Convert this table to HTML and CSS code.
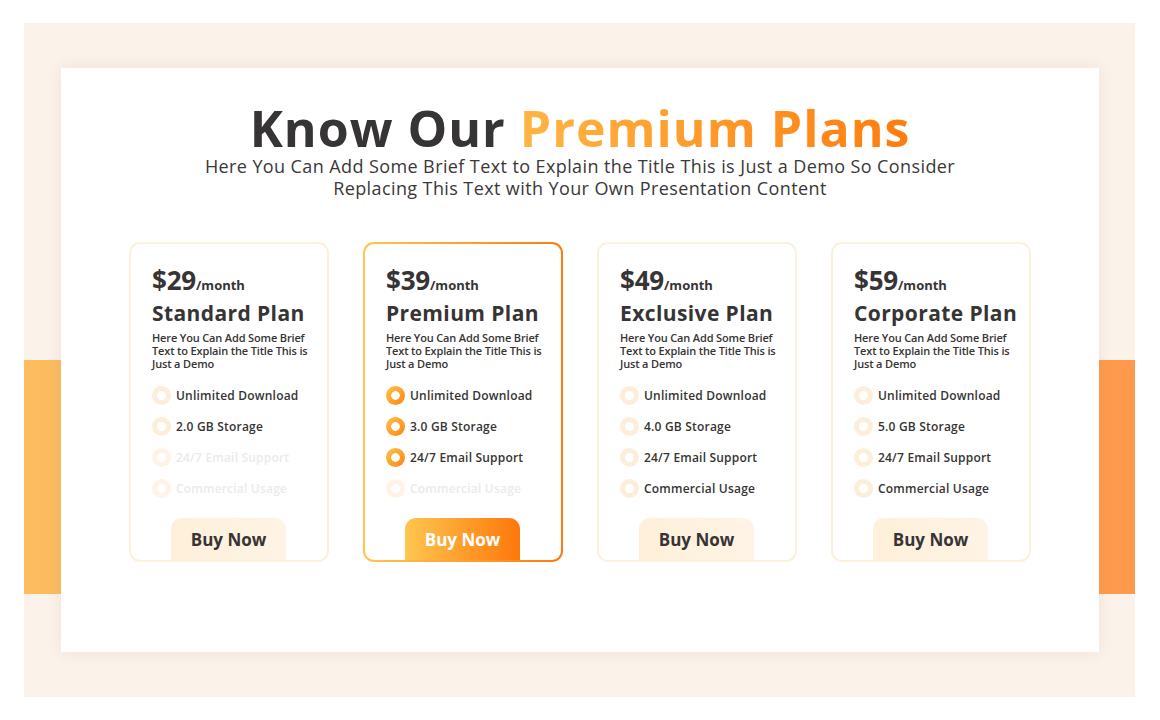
FILE: index.html
```html
<!DOCTYPE html>
<html lang="en">
<head>
<meta charset="utf-8">
<title>Know Our Premium Plans</title>
<link rel="stylesheet" href="styles.css">
</head>
<body>
<div class="frame">
  <div class="sheet">
    <h1 class="title">Know Our <span class="accent">Premium Plans</span></h1>
    <p class="lead">Here You Can Add Some Brief Text to Explain the Title This is Just a Demo So Consider<br>Replacing This Text with Your Own Presentation Content</p>
    <div class="plans">
      <div class="plan">
        <div class="price"><span class="amount">$29</span><span class="per">/month</span></div>
        <div class="name">Standard Plan</div>
        <p class="desc">Here You Can Add Some Brief Text to Explain the Title This is Just a Demo</p>
        <ul class="features">
          <li class="feat"><span class="dot"></span>Unlimited Download</li>
          <li class="feat"><span class="dot"></span>2.0 GB Storage</li>
          <li class="feat off"><span class="dot"></span>24/7 Email Support</li>
          <li class="feat off"><span class="dot"></span>Commercial Usage</li>
        </ul>
        <div class="buy">Buy Now</div>
      </div>
      <div class="plan featured">
        <div class="price"><span class="amount">$39</span><span class="per">/month</span></div>
        <div class="name">Premium Plan</div>
        <p class="desc">Here You Can Add Some Brief Text to Explain the Title This is Just a Demo</p>
        <ul class="features">
          <li class="feat"><span class="dot"></span>Unlimited Download</li>
          <li class="feat"><span class="dot"></span>3.0 GB Storage</li>
          <li class="feat"><span class="dot"></span>24/7 Email Support</li>
          <li class="feat off"><span class="dot"></span>Commercial Usage</li>
        </ul>
        <div class="buy">Buy Now</div>
      </div>
      <div class="plan">
        <div class="price"><span class="amount">$49</span><span class="per">/month</span></div>
        <div class="name">Exclusive Plan</div>
        <p class="desc">Here You Can Add Some Brief Text to Explain the Title This is Just a Demo</p>
        <ul class="features">
          <li class="feat"><span class="dot"></span>Unlimited Download</li>
          <li class="feat"><span class="dot"></span>4.0 GB Storage</li>
          <li class="feat"><span class="dot"></span>24/7 Email Support</li>
          <li class="feat"><span class="dot"></span>Commercial Usage</li>
        </ul>
        <div class="buy">Buy Now</div>
      </div>
      <div class="plan">
        <div class="price"><span class="amount">$59</span><span class="per">/month</span></div>
        <div class="name">Corporate Plan</div>
        <p class="desc">Here You Can Add Some Brief Text to Explain the Title This is Just a Demo</p>
        <ul class="features">
          <li class="feat"><span class="dot"></span>Unlimited Download</li>
          <li class="feat"><span class="dot"></span>5.0 GB Storage</li>
          <li class="feat"><span class="dot"></span>24/7 Email Support</li>
          <li class="feat"><span class="dot"></span>Commercial Usage</li>
        </ul>
        <div class="buy">Buy Now</div>
      </div>
    </div>
  </div>
</div>
</body>
</html>
```

FILE: styles.css
```css
* { box-sizing: border-box; }
html, body { margin: 0; padding: 0; background: #ffffff; }
body { font-family: "Open Sans", "Liberation Sans", sans-serif; color: #363434; }

.frame {
  width: 1111px;
  height: 674px;
  margin: 23px 0 0 24px;
  padding: 45px 36px 45px 37px;
  background:
    linear-gradient(to right, #fcbc60, #fe994d) 0 337px / 100% 234px no-repeat,
    #fbf2ea;
}

.sheet {
  height: 584px;
  background: #ffffff;
  box-shadow: 0 0 14px rgba(170, 130, 90, 0.14);
  padding-top: 35px;
  display: flex;
  flex-direction: column;
  align-items: center;
}

.title {
  margin: 0;
  font-size: 50px;
  line-height: 50px;
  font-weight: 700;
  letter-spacing: 1px;
  color: #363434;
  white-space: nowrap;
}
.accent {
  background: linear-gradient(to right, #feb543, #fe7c0f);
  -webkit-background-clip: text;
  background-clip: text;
  color: transparent;
}

.lead {
  margin: 2px 0 0;
  font-size: 18px;
  line-height: 22px;
  letter-spacing: 0.4px;
  text-align: center;
  color: #3a3838;
  white-space: nowrap;
}

.plans {
  margin-top: 43px;
  display: flex;
  gap: 34px;
}

.plan {
  width: 200px;
  height: 320px;
  border: 2px solid #fdf0dc;
  border-radius: 11px;
  padding: 21px 0 0 21px;
  display: flex;
  flex-direction: column;
  background: #ffffff;
}
.plan.featured {
  border: 2px solid transparent;
  background:
    linear-gradient(#fff, #fff) padding-box,
    linear-gradient(to right, #fec650, #fe7a0e) border-box;
}

.price { line-height: 30px; white-space: nowrap; }
.amount { font-size: 26px; font-weight: 700; letter-spacing: -0.2px; }
.per { font-size: 13px; font-weight: 700; }

.name {
  margin-top: 0;
  font-size: 21px;
  line-height: 26px;
  font-weight: 700;
  letter-spacing: 0.4px;
  white-space: nowrap;
}

.desc {
  margin: 5px 0 0;
  width: 165px;
  font-size: 11px;
  line-height: 13px;
  font-weight: 600;
  letter-spacing: -0.15px;
}

.features {
  list-style: none;
  margin: 10px 0 0;
  padding: 0;
}
.feat {
  height: 31px;
  display: flex;
  align-items: center;
  gap: 5px;
  font-size: 12px;
  font-weight: 600;
  letter-spacing: 0.2px;
  white-space: nowrap;
}
.dot {
  width: 19px;
  height: 19px;
  border-radius: 50%;
  border: 5.5px solid #fdeedb;
  flex: none;
}
.feat.off { color: #eceaea; }
.feat.off .dot { border-color: #fff3e7; }
.featured .feat .dot {
  border: none;
  background: radial-gradient(circle, #fff 0 4px, transparent 4.6px), linear-gradient(135deg, #fec34c, #fe840f);
}
.featured .feat.off .dot {
  border: 5.5px solid #fff3e7;
  background: none;
}

.buy {
  margin-top: auto;
  margin-left: 19px;
  width: 115px;
  height: 42px;
  border-radius: 11px 11px 0 0;
  background: linear-gradient(to right, #fef0da, #fef3e5);
  font-size: 17px;
  font-weight: 700;
  display: flex;
  align-items: center;
  justify-content: center;
  color: #363434;
}
.featured .buy {
  background: linear-gradient(to right, #fec650, #fe770a);
  color: #ffffff;
}
```
